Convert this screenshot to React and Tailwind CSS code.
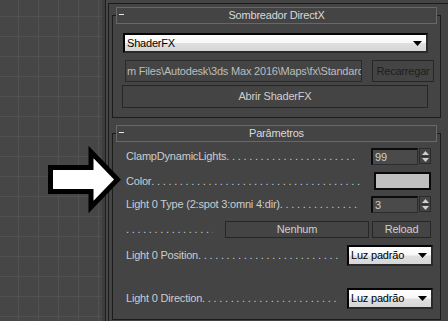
import React from "react";

const Dots = ({ className = "" }) => (
  <span className={`w-0 min-w-0 flex-1 overflow-hidden whitespace-nowrap ${className}`}>
    {". ".repeat(80)}
  </span>
);

const Arrow = () => (
  <svg width="9" height="5" viewBox="0 0 9 5">
    <path d="M0 0h9L4.5 5z" fill="#000" />
  </svg>
);

const Dropdown = ({ label, className = "" }) => (
  <div
    className={`flex items-center justify-between border-2 border-t-[#050505] border-l-[#050505] border-b-[#2a2a2a] border-r-[#2a2a2a] bg-[linear-gradient(to_bottom,#ffffff_0%,#f7f7f7_48%,#e0e0e0_52%,#d6d6d6_100%)] pl-[2px] pr-[4px] text-black ${className}`}
  >
    <span className="leading-none">{label}</span>
    <Arrow />
  </div>
);

const Spinner = ({ value }) => (
  <div className="flex shrink-0 items-start gap-[1px]">
    <div className="flex h-[17px] w-[47px] items-center border-t-2 border-l-2 border-b border-r border-t-[#0c0c0c] border-l-[#0c0c0c] border-b-[#2c2c2c] border-r-[#2c2c2c] bg-[#4a4a4a] pl-[2px] text-[#d0d0d0]">
      {value}
    </div>
    <div className="flex h-[16px] w-[12px] flex-col items-center justify-center gap-[1px] border border-[#2a2a2a]">
      <svg width="7" height="4" viewBox="0 0 7 4">
        <path d="M3.5 0L7 4H0z" fill="#cfcfcf" />
      </svg>
      <div className="h-[1px] w-[8px] bg-[#2e2e2e]" />
      <svg width="7" height="4" viewBox="0 0 7 4">
        <path d="M0 0h7L3.5 4z" fill="#cfcfcf" />
      </svg>
    </div>
  </div>
);

const Rollout = ({ title, className = "", children }) => (
  <div className={`ml-[3px] mr-[7px] border border-[#1c1c1c] ${className}`}>
    <div className="relative mx-[3px] -mt-[9px] flex h-[17px] items-center justify-center border border-[#686868] bg-[#444444] text-[#dadada]">
      <span className="absolute left-[2px] top-[6px] h-[1px] w-[5px] bg-[#e6e6e6]" />
      {title}
    </div>
    {children}
  </div>
);

const Row = ({ label, className = "", children, dotsGap = "mr-[13px]" }) => (
  <div className={`flex items-center pl-[13px] pr-[9px] ${className}`}>
    <span className="shrink-0 whitespace-nowrap">{label}</span>
    <Dots className={dotsGap} />
    {children}
  </div>
);

export default function App() {
  return (
    <div className="relative flex h-[321px] w-[448px] overflow-hidden bg-[#444444] font-['Liberation_Sans',Arial,sans-serif] text-[11px] tracking-[-0.2px] text-[#c9ccd0]">
      {/* viewport */}
      <div className="w-[102px] shrink-0 bg-[#464646] bg-[linear-gradient(to_right,#515151_1px,transparent_1px),linear-gradient(to_bottom,#515151_1px,transparent_1px)] bg-size-[20px_20px] bg-position-[18px_16px]" />
      <div className="w-[3px] shrink-0 bg-[#3d3d3d]" />
      <div className="w-[1px] shrink-0 bg-[#1c1c1c]" />
      <div className="w-[2px] shrink-0 bg-[#474747]" />

      {/* command panel */}
      <div className="min-w-0 flex-1 pt-[3px]">
        <div className="h-full border-l border-t border-[#1c1c1c]">
          <Rollout title="Sombreador DirectX" className="mt-[11px] pb-[9px]">
            <Dropdown label="ShaderFX" className="ml-[10px] mr-[12px] mt-[9px] h-[20px]" />
            <div className="mt-[7px] flex items-start">
              <div className="ml-[12px] flex h-[22px] w-[237px] shrink-0 items-center overflow-hidden whitespace-nowrap border border-[#2a2a2a] pl-[1px] text-[#bdbdbd]">
                m Files\Autodesk\3ds Max 2016\Maps\fx\Standard.fx
              </div>
              <div className="ml-[10px] flex h-[22px] w-[62px] shrink-0 items-center justify-center border border-[#262626] text-[#1e1e1e]">
                Recarregar
              </div>
            </div>
            <div className="ml-[9px] mt-[3px] flex h-[23px] w-[306px] items-center justify-center border border-[#262626] text-[#cfcfcf]">
              Abrir ShaderFX
            </div>
          </Rollout>

          <Rollout title="Parâmetros" className="mt-[15px] pb-[10px]">
            <Row label="ClampDynamicLights" className="mt-[6px] h-[17px]">
              <Spinner value="99" />
            </Row>
            <Row label="Color" className="mt-[7px] h-[18px]" dotsGap="mr-[11px]">
              <div className="h-[18px] w-[57px] shrink-0 border-2 border-[#0a0a0a] bg-[#c0c0c0]" />
            </Row>
            <Row label="Light 0 Type (2:spot 3:omni 4:dir)" className="mt-[6px] h-[17px]">
              <Spinner value="3" />
            </Row>
            <div className="mt-[8px] flex h-[17px] items-center pl-[13px] pr-[9px]">
              <Dots className="mr-[12px]" />
              <div className="flex h-[17px] w-[144px] shrink-0 items-center justify-center border border-[#262626] text-[#cfcfcf]">
                Nenhum
              </div>
              <div className="ml-[3px] flex h-[17px] w-[59px] shrink-0 items-center justify-center border border-[#262626] text-[#cfcfcf]">
                Reload
              </div>
            </div>
            <Row label="Light 0 Position" className="mt-[7px] h-[21px] !pr-[7px]" dotsGap="mr-[7px]">
              <Dropdown label="Luz padrão" className="h-[21px] w-[86px] shrink-0" />
            </Row>
            <Row label="Light 0 Direction" className="mt-[22px] h-[21px] !pr-[7px]" dotsGap="mr-[7px]">
              <Dropdown label="Luz padrão" className="h-[21px] w-[86px] shrink-0" />
            </Row>
          </Rollout>
        </div>
      </div>

      {/* annotation arrow */}
      <svg className="pointer-events-none absolute inset-0" width="448" height="321">
        <polygon
          points="50.5,167.5 91,167.5 91,152 117.5,179.5 91,207 91,191.5 50.5,191.5"
          fill="#ffffff"
          stroke="#000000"
          strokeWidth="5"
          strokeLinejoin="miter"
        />
      </svg>
    </div>
  );
}
